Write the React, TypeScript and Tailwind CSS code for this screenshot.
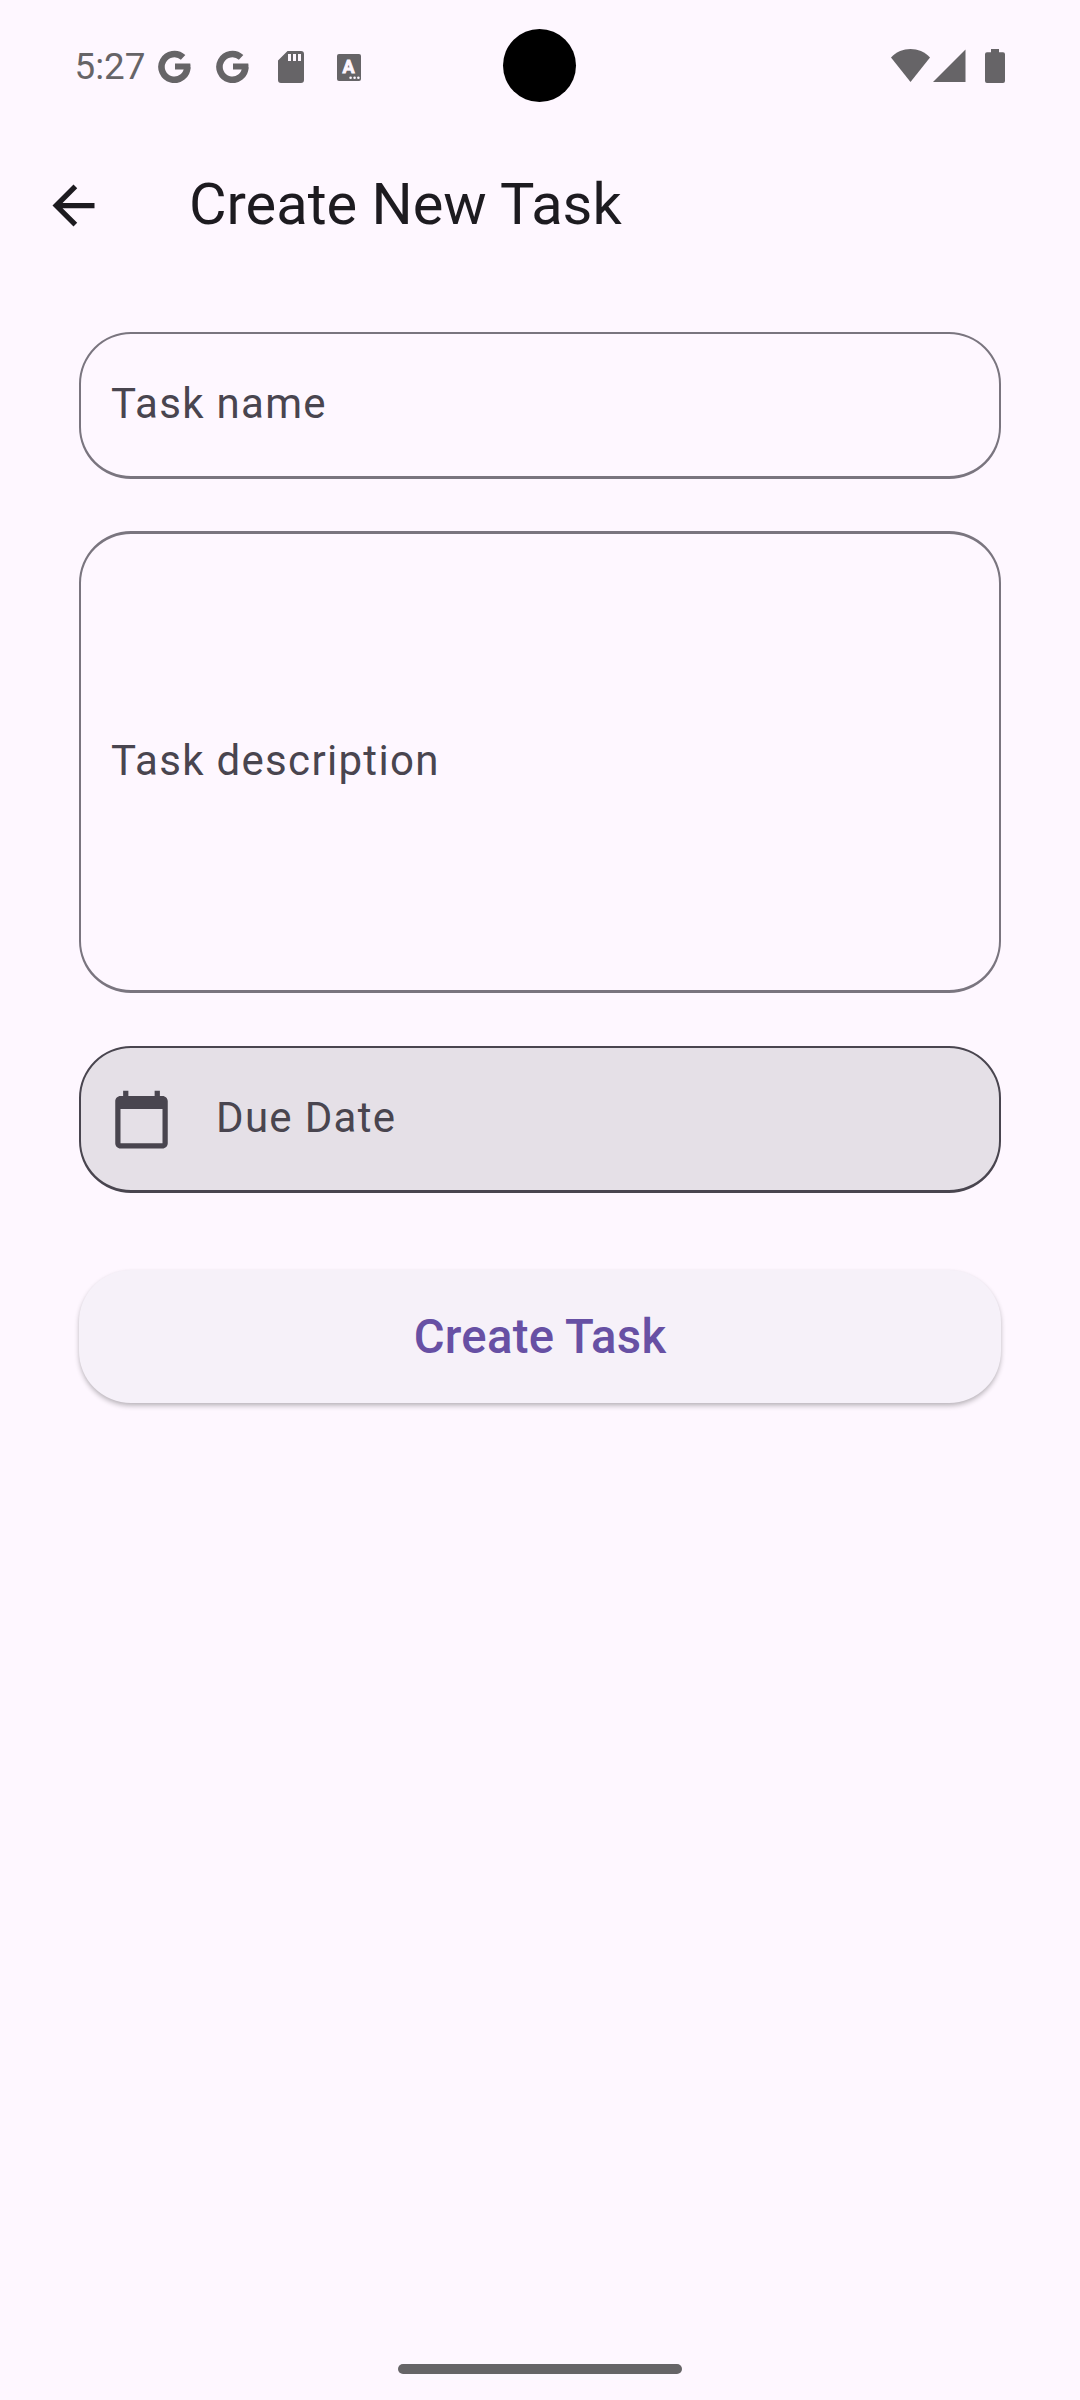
import React from 'react';

function GoogleMark() {
  return (
    <svg viewBox="0 0 33 33" className="h-[33px] w-[33px]" fill="none">
      <path d="M25.1 7.4A12.9 12.9 0 1 0 29.3 17.1" stroke="#666467" strokeWidth="6.6" />
      <path d="M17 13.6H32.3Q32.8 16.6 32.2 19.4H17Z" fill="#666467" />
    </svg>
  );
}

function StatusBar() {
  return (
    <header className="relative flex h-[132px] items-start justify-between text-[#666467]">
      <div className="flex items-start">
        <span className="ml-[74.500px] mt-[44.5px] w-[83.750px] text-[36.75px] leading-[44px]">5:27</span>
        <span className="mt-[50px]"><GoogleMark /></span>
        <span className="ml-[25px] mt-[50px]"><GoogleMark /></span>
        <svg viewBox="0 0 26 32" className="ml-[28.750px] mt-[51px] h-8 w-[26px]">
          <path fill="currentColor" fillRule="evenodd" d="M9.5 0H23a3 3 0 0 1 3 3v26a3 3 0 0 1-3 3H3a3 3 0 0 1-3-3V9.5ZM10 3v7h3V3ZM15 3v7h3V3ZM20 3v7h3V3Z" />
        </svg>
        <svg viewBox="0 0 24 27" className="ml-[33px] mt-[53.5px] h-[27px] w-6">
          <rect width="24" height="27" rx="2" fill="currentColor" />
          <text x="11.6" y="19.3" textAnchor="middle" fontSize="18" fontWeight="700" fill="#fef7ff" stroke="#fef7ff" strokeWidth=".8">A</text>
          <circle cx="13.6" cy="23.7" r="1.3" fill="#fef7ff" />
          <circle cx="17.6" cy="23.7" r="1.3" fill="#fef7ff" />
          <circle cx="21.4" cy="23.7" r="1.3" fill="#fef7ff" />
        </svg>
      </div>
      <div className="absolute left-[503px] top-[29px] h-[73px] w-[73px] rounded-full bg-black" />
      <div className="mr-[75px] mt-[49px] flex">
        <svg viewBox="0 0 39 33" className="h-[33px] w-[39px]">
          <path fill="currentColor" d="M0 8.5C10.500-2.800 28.500-2.800 39 8.500L19.500 33Z" />
        </svg>
        <svg viewBox="0 0 33 33" className="ml-[3px] h-[33px] w-[33px]">
          <path fill="currentColor" d="M32.500.5V33H0Z" />
        </svg>
        <svg viewBox="0 0 20 34" className="ml-[19px] h-[34px] w-5">
          <path fill="currentColor" d="M6 0h8v3.300h4a2 2 0 0 1 2 2V32a2 2 0 0 1-2 2H2a2 2 0 0 1-2-2V5.300a2 2 0 0 1 2-2h4Z" />
        </svg>
      </div>
    </header>
  );
}

function AppBar() {
  return (
    <div className="flex h-[147px] items-center pl-[42px] text-[#1d1b20]">
      <svg viewBox="0 0 24 24" className="h-[63px] w-[63px]" fill="currentColor">
        <path d="M20 11H7.830l5.590-5.590L12 4l-8 8 8 8 1.410-1.410L7.830 13H20v-2z" />
      </svg>
      <h1 className="ml-[84px] pb-[3px] text-[57.750px] leading-[72px]">Create New Task</h1>
    </div>
  );
}

export default function App() {
  return (
    <div className="flex h-[2400px] w-[1080px] flex-col overflow-hidden bg-[#fef7ff] font-['Roboto',sans-serif]">
      <StatusBar />
      <AppBar />
      <main className="mx-[79px] mt-[53px] flex flex-col text-[42px] leading-[63px] tracking-[1.3125px] text-[#49454f]">
        <div className="flex h-[147px] items-center rounded-[52px] border-2 border-b-3 border-[#7a757f] pb-[3px] pl-[30px]">
          Task name
        </div>
        <div className="mt-[52px] flex h-[462px] items-center rounded-[52px] border-x-2 border-y-3 border-[#7a757f] pb-[3px] pl-[30px]">
          Task description
        </div>
        <div className="mt-[53px] flex h-[147px] items-center rounded-[52px] border-2 border-b-3 border-[#49454f] bg-[#e5e0e7] pl-[29.250px]">
          <svg viewBox="0 0 24 24" className="h-[63px] w-[63px]" fill="currentColor">
            <path d="M20 3h-1V1h-2v2H7V1H5v2H4c-1.100 0-2 .9-2 2v16c0 1.100.9 2 2 2h16c1.100 0 2-.9 2-2V5c0-1.100-.9-2-2-2zm0 18H4V8h16v13z" />
          </svg>
          <span className="ml-[42.750px] pb-[3px]">Due Date</span>
        </div>
        <button className="mt-[77px] h-[133px] rounded-[52px] bg-[#f6f1f9] pt-[2px] text-[47.250px] font-medium tracking-[0.2625px] text-[#6750a4] shadow-[0_3px_5px_rgba(0,0,0,0.24),0_1px_3px_rgba(0,0,0,0.04)]">
          Create Task
        </button>
      </main>
      <div className="mb-[26px] mt-auto h-[10px] w-[284px] self-center rounded-full bg-[#666467]" />
    </div>
  );
}
